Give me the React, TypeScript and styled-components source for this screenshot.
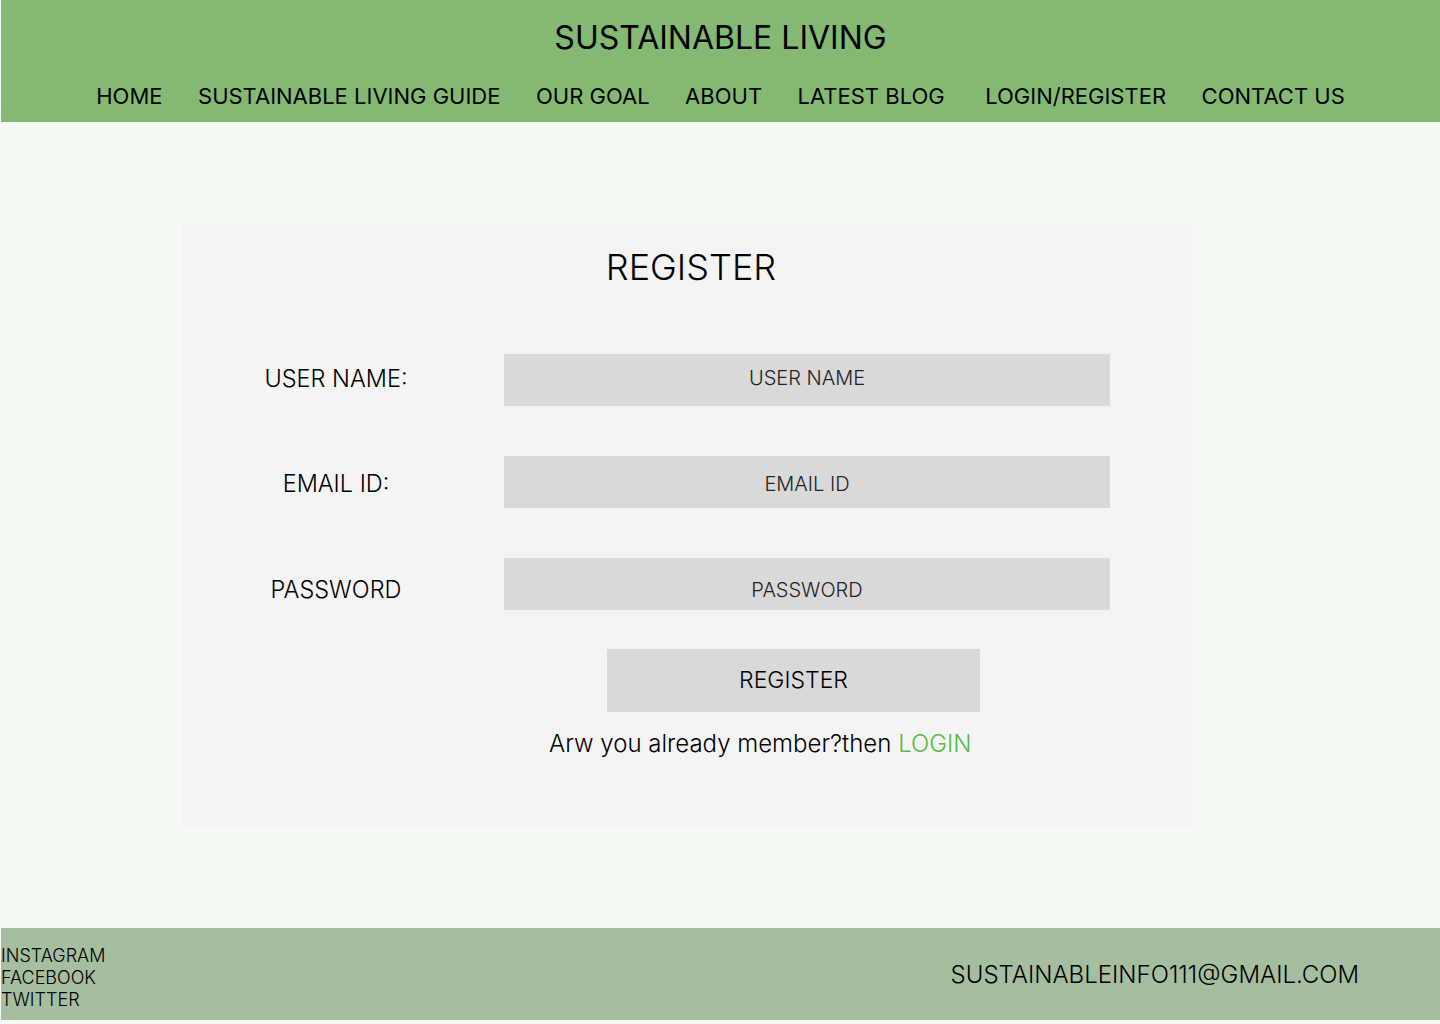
import React from "react";
import styled, { createGlobalStyle } from "styled-components";

const GlobalStyle = createGlobalStyle`
  html, body {
    margin: 0;
    padding: 0;
    background: #f6faf4;
    font-family: Inter, "Noto Sans", "Liberation Sans", sans-serif;
    color: #000;
  }
  * { box-sizing: border-box; }
`;

const Page = styled.div`
  padding-left: 1px;
  display: flex;
  flex-direction: column;
`;

const Header = styled.header`
  background: #84b974;
  height: 122px;
  display: flex;
  flex-direction: column;
  align-items: center;
`;

const SiteTitle = styled.h1`
  margin: 19px 0 0;
  font-size: 32px;
  line-height: 38px;
  font-weight: 400;
`;

const Nav = styled.nav`
  margin-top: 25px;
  display: flex;
  gap: 35.5px;
`;

const NavLink = styled.a<{ $extra?: number }>`
  font-size: 22px;
  line-height: 28px;
  font-weight: 400;
  color: #000;
  text-decoration: none;
  margin-left: ${(p) => p.$extra ?? 0}px;
`;

const Main = styled.main`
  height: 806px;
  display: flex;
  align-items: center;
  padding-left: 181px;
`;

const Card = styled.section`
  width: 1010px;
  height: 603px;
  background: #f4f4f4;
  display: flex;
  flex-direction: column;
  padding-top: 21px;
`;

const CardTitle = styled.h2`
  margin: 0;
  padding-left: 8px;
  text-align: center;
  font-size: 36px;
  line-height: 44px;
  font-weight: 300;
`;

const Fields = styled.div`
  margin-top: 65px;
  display: flex;
  flex-direction: column;
  gap: 50px;
`;

const Row = styled.div`
  display: grid;
  grid-template-columns: 308px 606px;
  column-gap: 14px;
  align-items: center;
`;

const Label = styled.label<{ $shift?: number }>`
  text-align: center;
  font-size: 23.5px;
  line-height: 28px;
  font-weight: 300;
  position: relative;
  top: ${(p) => p.$shift ?? 0}px;
`;

const Input = styled.input<{ $shift?: number }>`
  height: 52px;
  width: 606px;
  border: none;
  outline: none;
  background: #d9d9d9;
  text-align: center;
  font-family: inherit;
  font-size: 20px;
  font-weight: 300;
  color: #222;
  padding: ${(p) => {
    const s = (p.$shift ?? 0) * 2;
    return s >= 0 ? `${s}px 0 0` : `0 0 ${-s}px`;
  }};
  &::placeholder {
    color: #222;
    opacity: 1;
  }
`;

const Actions = styled.div`
  margin-top: 39px;
  display: flex;
  flex-direction: column;
`;

const SubmitButton = styled.button`
  margin-left: 425px;
  width: 373px;
  height: 63px;
  border: none;
  background: #d9d9d9;
  font-family: inherit;
  font-size: 23px;
  font-weight: 300;
  color: #000;
  cursor: pointer;
`;

const Switch = styled.p`
  margin: 17px 0 0 367px;
  font-size: 24px;
  line-height: 30px;
  font-weight: 300;
`;

const LoginLink = styled.a`
  color: #5cb946;
  text-decoration: none;
`;

const Footer = styled.footer`
  background: #a6bea0;
  height: 92px;
  display: flex;
  justify-content: space-between;
  align-items: flex-start;
  padding: 17px 81px 0 0;
`;

const Socials = styled.div`
  display: flex;
  flex-direction: column;
`;

const Social = styled.a`
  font-size: 18px;
  line-height: 22px;
  font-weight: 300;
  color: #000;
  text-decoration: none;
`;

const Email = styled.a`
  margin-top: 15px;
  font-size: 24px;
  line-height: 30px;
  font-weight: 300;
  color: #000;
  text-decoration: none;
`;

const navItems = [
  "HOME",
  "SUSTAINABLE LIVING GUIDE",
  "OUR GOAL",
  "ABOUT",
  "LATEST BLOG",
  "LOGIN/REGISTER",
  "CONTACT US",
];

const fields = [
  { label: "USER NAME:", placeholder: "USER NAME", type: "text", labelShift: -1, inputShift: -2 },
  { label: "EMAIL ID:", placeholder: "EMAIL ID", type: "email", labelShift: 2, inputShift: 2 },
  { label: "PASSWORD", placeholder: "PASSWORD", type: "text", labelShift: 6, inputShift: 6 },
];

export default function App() {
  return (
    <>
      <GlobalStyle />
      <Page>
        <Header>
          <SiteTitle>SUSTAINABLE LIVING</SiteTitle>
          <Nav>
            {navItems.map((item) => (
              <NavLink key={item} href="#" $extra={item === "LOGIN/REGISTER" ? 5 : 0}>
                {item}
              </NavLink>
            ))}
          </Nav>
        </Header>
        <Main>
          <Card>
            <CardTitle>REGISTER</CardTitle>
            <Fields>
              {fields.map((f) => (
                <Row key={f.label}>
                  <Label $shift={f.labelShift}>{f.label}</Label>
                  <Input type={f.type} placeholder={f.placeholder} $shift={f.inputShift} />
                </Row>
              ))}
            </Fields>
            <Actions>
              <SubmitButton type="button">REGISTER</SubmitButton>
              <Switch>
                Arw you already member?then <LoginLink href="#">LOGIN</LoginLink>
              </Switch>
            </Actions>
          </Card>
        </Main>
        <Footer>
          <Socials>
            <Social href="#">INSTAGRAM</Social>
            <Social href="#">FACEBOOK</Social>
            <Social href="#">TWITTER</Social>
          </Socials>
          <Email href="#">SUSTAINABLEINFO111@GMAIL.COM</Email>
        </Footer>
      </Page>
    </>
  );
}
